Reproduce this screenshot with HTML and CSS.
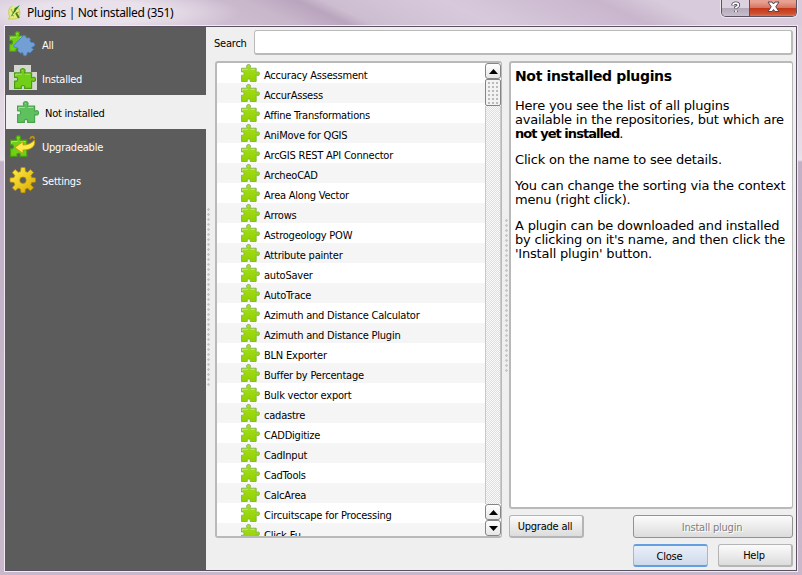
FILE: index.html
```html
<!DOCTYPE html>
<html lang="en">
<head>
<meta charset="utf-8">
<title>Plugins</title>
<link rel="stylesheet" href="styles.css">
</head>
<body>
<svg width="0" height="0" class="defs">
  <defs>
    <linearGradient id="lime" x1="0" y1="0" x2="0" y2="1"><stop offset="0" stop-color="#a8df22"/><stop offset="1" stop-color="#90d000"/></linearGradient>
    <linearGradient id="gold" x1="0" y1="0" x2="1" y2="1"><stop offset="0" stop-color="#fff04a"/><stop offset="1" stop-color="#d9a800"/></linearGradient>
    <symbol id="piece" viewBox="0 0 19 18" preserveAspectRatio="none">
      <path d="M.5 4.2H5.8C6.3 3.6 5.2 2.8 5.6 1.6C6.2.2 9 .2 9.5 1.6C9.9 2.8 8.8 3.6 9.2 4.2H15.2V8.3C16.2 8.5 17 7.5 17.9 8.1C18.7 9 18.7 10.4 17.9 11.2C17 11.9 16.2 11 15.2 11.2V17.5H9.2C8.9 16.8 9.5 16.3 9.1 15.6C8.6 14.8 6.9 14.8 6.4 15.6C6 16.3 6.6 16.8 6.3 17.5H.5V11.2C1.2 11 2 11.7 2.6 11C3.2 10.2 3.2 9 2.6 8.3C2 7.6 1.2 8.2 .5 8Z"/>
      <path class="shine" d="M1.5 7V5.3H6.8M7 2.4L7.5 1.8M9.6 5.3H14"/>
    </symbol>
  </defs>
</svg>
<div class="window">
  <header class="titlebar">
    <svg class="logo" width="15" height="16" viewBox="0 0 15 16"><path d="M5 2C1 4 1 10 3 13L1 15H5C8 15 11 15 12 12C14 8 12 4 10 3" fill="#e4ec7c" stroke="#c4cf5b"/><path d="M4 5L6 9M8 4V8M4 11L7 12M9 9L12 8" stroke="#9cac37" fill="none"/><path d="M13 1L4 13L8 4Z" fill="#20802a"/><path d="M9 9L12 14" stroke="#527819" stroke-width="2"/></svg>
    <span class="title">Plugins | Not installed (351)</span>
    <div class="controls">
      <svg class="help-control" width="28" height="17" viewBox="0 0 28 17"><path d="M11.5 5.5V4.8Q11.5 3 14.3 3Q17 3 17 5Q17 6.2 14.5 7.5V8.5M14.5 10.5V12" fill="none" stroke="#4c4a59" stroke-width="3.6"/><path d="M11.5 5V4.8Q11.5 3 14.3 3Q17 3 17 5Q17 6.2 14.5 7.5V8.2M14.5 10.3V12" fill="none" stroke="#fff" stroke-width="1.8"/></svg>
      <svg class="close-control" width="46" height="17" viewBox="0 0 46 17"><path d="M18 2H22L23.5 4L25 2H29L25.8 6.8L29 11.5H25L23.5 9.5L22 11.5H18L21.2 6.8Z" fill="#fff" stroke="#56434d"/></svg>
    </div>
  </header>
  <div class="client">
    <nav class="sidebar">
      <div class="nav-item"><svg width="28" height="28" viewBox="0 0 28 28"><use href="#piece" x="0" y="1" width="21" height="21" class="green"/><path d="M15 5L18 8.2C20 6.5 22.5 9 20.8 11L22.5 12.5C24 12 26.5 13 25.8 15.5C25 17 23 16.5 22.5 18L24.5 19.5L21 23C19.5 21.5 18 22 18 24C17.5 26.5 14.5 26.5 14 24C14 22.5 12.5 22 11.5 23.5L8.5 20.5C10 18.5 8.5 17 6.8 17.5C4.5 18 3.8 15.5 5.5 14.5L9 11Z" fill="#72a0d5" stroke="#4a7cc0" stroke-width=".8"/></svg><span>All</span></div>
      <div class="nav-item"><svg width="28" height="28" viewBox="0 0 28 28"><path d="M5 1H22V8H28V26H0V8H5Z" fill="#d3d7cf"/><use href="#piece" x="5" y="4" width="22" height="21" class="green"/></svg><span>Installed</span></div>
      <div class="nav-item selected"><svg width="28" height="28" viewBox="0 0 28 28"><use href="#piece" x="3" y="3" width="22" height="22" class="pale"/></svg><span>Not installed</span></div>
      <div class="nav-item"><svg width="28" height="28" viewBox="0 0 28 28"><use href="#piece" x="1" y="3" width="21" height="22" class="green"/><path d="M21 7C22 4 25 4 25 7" fill="none" stroke="#c18d10" stroke-width="1.8"/><path d="M6 15.5L14 9.5V13C19 13 23 11 25.5 8C27 14.5 22 18 14 18V21.5Z" fill="#ffe94c" stroke="#ba9700" stroke-width=".8"/></svg><span>Upgradeable</span></div>
      <div class="nav-item"><svg width="28" height="28" viewBox="0 0 28 28"><g fill="url(#gold)" stroke="#b88c00" stroke-width=".7"><path fill-rule="evenodd" d="M12 1.5L16 1.5L16.5 5.5L18.5 6.3L21.5 3.5L24.5 6.5L22 9.5L22.7 11.5L26.5 12V16L22.7 16.5L21.8 18.8L24.5 21.7L21.5 24.7L18.5 22.2L16.4 23L16 26.7H12L11.5 23L9.2 22.2L6.2 24.7L3.3 21.7L5.8 18.8L5 16.5L1 16V12L5 11.5L5.8 9.5L3.3 6.5L6.2 3.5L9.3 6.3L11.5 5.5ZM14 11A3.2 3.2 0 1 0 14 17.4A3.2 3.2 0 1 0 14 11"/></g></svg><span>Settings</span></div>
    </nav>
    <div class="handle"></div>
    <main class="content">
      <div class="search"><label for="query">Search</label><input id="query" type="text"></div>
      <div class="panes">
        <section class="list-pane">
          <ul class="plugins" id="plugins"></ul>
          <div class="scrollbar">
            <div class="arrow"><svg width="9" height="5"><path d="M0 5L4.5 0L9 5Z"/></svg></div>
            <div class="thumb"></div>
            <div class="track"></div>
            <div class="arrow"><svg width="9" height="5"><path d="M0 5L4.5 0L9 5Z"/></svg></div>
            <div class="arrow"><svg width="9" height="5"><path d="M0 0H9L4.5 5Z"/></svg></div>
          </div>
        </section>
        <div class="handle inner"></div>
        <section class="detail-pane">
          <article class="details">
            <h1>Not installed plugins</h1>
            <p>Here you see the list of all plugins<br>available in the repositories, but which are<br><b>not yet installed</b>.</p>
            <p>Click on the name to see details.</p>
            <p>You can change the sorting via the context<br>menu (right click).</p>
            <p>A plugin can be downloaded and installed<br>by clicking on it's name, and then click the<br>'Install plugin' button.</p>
          </article>
          <div class="actions"><button class="upgrade">Upgrade all</button><button class="install" disabled>Install plugin</button></div>
        </section>
      </div>
      <footer class="footer"><button class="close">Close</button><button>Help</button></footer>
    </main>
  </div>
</div>
<script src="script.js"></script>
</body>
</html>
```
FILE: styles.css
```css
* { box-sizing: border-box; }
body { margin: 0; width: 802px; height: 575px; overflow: hidden; font: 11px/14px "DejaVu Sans Condensed", "DejaVu Sans", sans-serif; font-stretch: condensed; color: #000; letter-spacing: -.22px; }
.defs { position: absolute; }
.window { width: 802px; height: 575px; padding: 0 5px 4px 5px; background: linear-gradient(#d8cbdb 0, #e5dde7 150px, #e8e2ea 160px, #c2b0c6 162px, #c9b8cc 100%); display: flex; flex-direction: column; }
.titlebar { height: 26px; margin: 0 -5px; padding: 4px 5px 0 7px; display: flex; align-items: flex-start; background: radial-gradient(ellipse 145px 24px at 95px 12px, #eee8f0cc 0 45%, transparent), linear-gradient(25deg, #d6cad9 0, #d2c2d5 22%, #c8b6cb 35%, #b9a5be 41%, #cdbdd0 44%, #d8cadc 58%, #c9b6cd 76%, #d8cbdb 83%); }
.logo { flex: none; }
.title { font: 12px/16px "Noto Sans", sans-serif; letter-spacing: -.36px; margin-left: 5px; padding-top: 1px; white-space: nowrap; }
.controls { display: flex; margin: -4px 0 0 auto; border: 1px solid #5b5261; border-top: 0; border-radius: 0 0 5px 5px; box-shadow: 0 0 0 1px #eee5ee; overflow: hidden; height: 17px; width: 76px; }
.help-control { background: linear-gradient(#dcd2df 0 45%, #b3a9b9 50%, #cbc2cf); border-right: 1px solid #5b5261; flex: none; }
.close-control { background: linear-gradient(#e7a091 0 2px, #d87563 45%, #c43818 50%, #cd5030 80%, #e08269); flex: none; }
.client { flex: 1; min-height: 0; display: flex; background: #efefef; border: 1px solid #5a5260; border-left-width: 0; box-shadow: 0 0 0 1px #f1eaf2; }
.sidebar { width: 201px; background: #5c5c5c; color: #fff; flex: none; }
.nav-item { height: 34px; display: flex; align-items: center; padding-left: 4px; gap: 5px; }
.nav-item span { padding-top: 4px; }
.selected { background: #efefef; color: #000; padding-left: 8px; gap: 3px; margin-left: 1px; }
.green { fill: #72cf17; stroke: #4d9b14; }
.pale { fill: #5fc15e; stroke: #4ba34f; }
.shine { fill: none; stroke: #fff; stroke-opacity: .45; stroke-width: .8; }
.handle { width: 3px; height: 178px; margin: 181px 0 0 1px; flex: none; background: radial-gradient(circle at 1.5px 1.5px, #c8c8c8 1px, transparent 1.5px) 0 0 / 3px 5px; }
.content { flex: 1; min-width: 0; padding: 3px 3px 3px 5px; display: flex; flex-direction: column; }
.search { height: 25px; display: flex; align-items: center; }
.search label { width: 39px; margin-left: -1px; padding-top: 2px; white-space: nowrap; }
.search input { flex: 1; height: 25px; margin-left: 1px; border: 2px solid #bababa; border-width: 1px 2px 2px 1px; border-radius: 3px; background: #fff; outline: 0; }
.panes { display: flex; height: 477px; margin-top: 6px; }
.list-pane { width: 287px; flex: none; display: flex; border: 2px solid #b9b9b9; border-right-width: 1px; border-radius: 3px; background: #fff; overflow: hidden; }
.plugins { list-style: none; margin: 0; padding: 0; flex: 1; min-width: 0; overflow: hidden; }
.plugins li { height: 20px; display: flex; align-items: center; padding-left: 24px; white-space: nowrap; }
.plugins li:nth-child(even) { background: #f5f5f5; }
.plugins svg { width: 19px; height: 18px; margin-right: 4px; flex: none; fill: url(#lime); stroke: #7bac48; stroke-width: .8; }
.plugins span { padding-top: 5px; }
.scrollbar { width: 16px; display: flex; flex-direction: column; }
.arrow { height: 16px; border: 1px solid #858585; border-radius: 3px; display: grid; place-items: center; background: linear-gradient(#fff, #e6e6e6); flex: none; }
.thumb { height: 27px; border: 1px solid #858585; border-radius: 2px; flex: none; background: radial-gradient(circle at 2px 2px, #bbb 1px, transparent 1.3px) 1px 1px / 4px 4px, #f3f3f3; }
.track { flex: 1; border: solid #c8c8c8; border-width: 0 1px; background: repeating-conic-gradient(#dedede 0 25%, #fafafa 0 50%) 0 0 / 2px 2px; }
.handle.inner { height: 154px; margin: 158px 1px 0 3px; }
.detail-pane { width: 284px; flex: none; }
.details { height: 448px; border: 2px solid #b9b9b9; border-width: 2px 1px 2px 2px; border-radius: 3px; background: #fff; padding: 5px 4px; font: 13px/14px "DejaVu Sans", sans-serif; letter-spacing: -.2px; white-space: nowrap; }
.details h1 { font-size: 14px; line-height: 17px; margin: 0 0 14px; letter-spacing: -.35px; }
.details b { letter-spacing: -.95px; }
.details p { margin: 0 0 12px; }
.actions { display: flex; justify-content: space-between; margin-top: 6px; }
button { font: inherit; letter-spacing: inherit; width: 75px; height: 23px; border: 1px solid #b5b5b5; border-width: 1px 2px 2px 1px; border-radius: 3px; background: linear-gradient(#fbfbfb, #dcdcdc); color: #000; padding: 2px 2px 0 0; }
.install { width: 160px; color: #808080; border-color: #929292; border-width: 1px; text-shadow: 1px 1px #fff; }
.footer { display: flex; justify-content: flex-end; gap: 10px; margin-top: 6px; }
.close { border-color: #659ee0 #b5b5b5; border-width: 2px 1px; background: linear-gradient(#eaf0f9, #ced9ea); }
```
FILE: script.js
```js
const names = ["Accuracy Assessment", "AccurAssess", "Affine Transformations", "AniMove for QGIS", "ArcGIS REST API Connector", "ArcheoCAD", "Area Along Vector", "Arrows", "Astrogeology POW", "Attribute painter", "autoSaver", "AutoTrace", "Azimuth and Distance Calculator", "Azimuth and Distance Plugin", "BLN Exporter", "Buffer by Percentage", "Bulk vector export", "cadastre", "CADDigitize", "CadInput", "CadTools", "CalcArea", "Circuitscape for Processing", "Click-Fu"];
document.getElementById("plugins").innerHTML = names
  .map(name => `<li><svg viewBox="0 0 19 18"><use href="#piece"/></svg><span>${name}</span></li>`)
  .join("");
```
